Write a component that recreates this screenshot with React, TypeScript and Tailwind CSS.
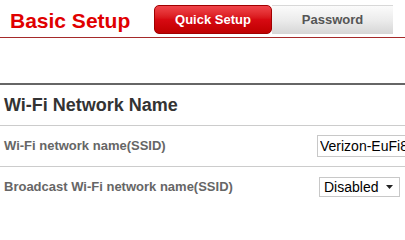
export default function App() {
  return (
    <div className="w-[405px] h-[200px] overflow-hidden bg-white font-['Liberation_Sans',Arial,sans-serif]">
      {/* Header */}
      <div className="flex items-end h-[38px] border-b border-[#a52a2a]">
        <h1 className="pl-[10px] w-[154px] pb-[6px] text-[21px] leading-none font-bold text-[#e00000]">Basic Setup</h1>
        <div className="flex h-[35px] pt-[3px] pb-[3px]">
          <div className="w-[118px] flex items-center justify-center rounded-[5px] border border-[#a00000] bg-gradient-to-b from-[#f0444a] via-[#d70a12] to-[#c00000] text-white text-[13px] font-bold">
            Quick Setup
          </div>
          <div className="w-[121px] flex items-center justify-center border-t border-[#d8d8d8] bg-gradient-to-b from-[#fbfbfb] via-[#ececec] to-[#d6d6d6] text-[#555] text-[13px] font-bold">
            Password
          </div>
        </div>
      </div>

      {/* Section */}
      <div className="mt-[45px] border-t-[2px] border-[#666]">
        <h2 className="h-[41px] flex items-center pl-[4px] text-[18px] font-bold text-[#333] border-b border-[#ccc]">
          Wi-Fi Network Name
        </h2>
        <div className="h-[41px] flex items-center justify-between border-b border-[#ccc]">
          <span className="pl-[4px] text-[13px] font-bold text-[#666]">Wi-Fi network name(SSID)</span>
          <input
            readOnly
            value="Verizon-EuFi8888"
            className="w-[150px] h-[22px] -mr-[62px] px-[2px] border border-[#c8c8c8] text-[14px] text-black outline-none"
          />
        </div>
        <div className="h-[41px] flex items-center border-b border-[#ccc]">
          <span className="pl-[4px] text-[13px] font-bold text-[#666] w-[319px]">Broadcast Wi-Fi network name(SSID)</span>
          <div className="w-[81px] h-[20px] flex items-center justify-between pl-[4px] pr-[6px] border border-[#c8c8c8] text-[14px] text-black">
            <span>Disabled</span>
            <svg width="7" height="4" viewBox="0 0 7 4"><path d="M0 0h7L3.5 4z" fill="#222" /></svg>
          </div>
        </div>
      </div>
    </div>
  );
}
